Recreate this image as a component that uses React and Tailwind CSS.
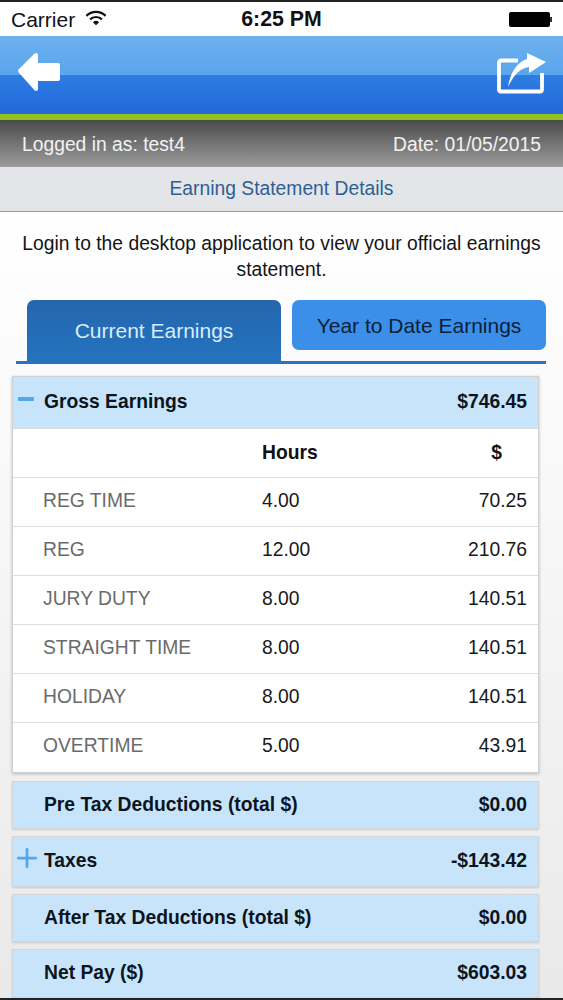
import { Plus } from 'lucide-react'

const rows = [
  { name: 'REG TIME', hours: '4.00', amount: '70.25' },
  { name: 'REG', hours: '12.00', amount: '210.76' },
  { name: 'JURY DUTY', hours: '8.00', amount: '140.51' },
  { name: 'STRAIGHT TIME', hours: '8.00', amount: '140.51' },
  { name: 'HOLIDAY', hours: '8.00', amount: '140.51' },
  { name: 'OVERTIME', hours: '5.00', amount: '43.91' },
]

function SummaryRow({ label, amount, icon, className }) {
  return (
    <div className={`ml-3 mr-6 flex items-center justify-between border border-[#d2d6da] bg-[#c8e4fb] pl-[31px] pr-[11px] text-[19.3px] font-bold text-[#0c1420] shadow-[0_1px_2px_rgba(0,0,0,0.15)] ${className}`}>
      <div className="relative">
        {icon}
        {label}
      </div>
      <div>{amount}</div>
    </div>
  )
}

function StatusBar() {
  return (
    <div className="flex h-9 items-center justify-between border-t-2 border-t-[#222] bg-white px-[11px] pt-[1px] text-[#111]">
      <div className="flex w-[150px] items-center gap-[10px] text-[21px]">
        Carrier
        <svg width="22" height="16" viewBox="0 0 24 17" fill="none" stroke="#111" strokeWidth="2.4" className="mb-[4px]">
          <path d="M1.5 6.2a15 15 0 0 1 21 0" />
          <path d="M5.5 10a9.5 9.5 0 0 1 13 0" />
          <path d="M12 16.5 8.6 13a5 5 0 0 1 6.8 0z" fill="#111" stroke="none" />
        </svg>
      </div>
      <div className="text-[21.3px] font-bold">6:25 PM</div>
      <div className="flex w-[150px] items-center justify-end">
        <div className="h-[15px] w-[41px] rounded-[2px] bg-black" />
        <div className="h-[5px] w-[2px] bg-[#333]" />
      </div>
    </div>
  )
}

function Header() {
  return (
    <div className="flex h-[78px] items-start justify-between bg-[linear-gradient(#6cb0ee_0%,#5ba5ec_50%,#2f7de3_50%,#2068d9_100%)] px-[17px] pt-[15px]">
      <svg width="44" height="42" viewBox="0 0 44 42" fill="#fff" stroke="#fff" strokeLinejoin="round" strokeWidth="4">
        <path d="M3 20 19 4v10h22v14H19v10z" />
      </svg>
      <svg width="50" height="46" viewBox="0 0 50 46" fill="none">
        <path d="M22 9.5H5a2 2 0 0 0-2 2v27a2 2 0 0 0 2 2h39a2 2 0 0 0 2-2V22" stroke="#fff" strokeWidth="3.8" />
        <path d="M12 36C14 22 21 11 31 8V2l19 9-17 11v-6C24 17 17 25 12 36z" fill="#fff" />
      </svg>
    </div>
  )
}

export default function App() {
  return (
    <div className="h-[1000px] w-[563px] overflow-hidden border-b-2 border-b-[#222] bg-[linear-gradient(#ffffff_20%,#f8f8f8_50%,#e9e9e9_100%)] font-['Liberation_Sans',Arial,sans-serif]">
      <StatusBar />
      <Header />
      <div className="h-[6px] bg-[#8fc31a]" />
      <div className="flex h-[47px] items-center justify-between bg-[linear-gradient(#4b4b4b,#9c9c9c)] px-[22px] pt-[4px] text-[19.3px] text-[#f2f2f2]">
        <div>Logged in as: test4</div>
        <div>Date: 01/05/2015</div>
      </div>
      <div className="flex h-[45px] items-center justify-center border-b border-b-[#999] bg-[#e3e5e8] pt-[1px] text-[19.3px] text-[#2e5f94]">
        Earning Statement Details
      </div>

      <p className="px-5 pt-[19px] text-center text-[19.3px] leading-[26px] text-[#151515]">
        Login to the desktop application to view your official earnings statement.
      </p>

      <div className="ml-4 mr-[17px] mt-[17px] flex h-[64px] items-start gap-[11px] border-b-[3px] border-b-[#2a72bd] pl-[11px]">
        <div className="flex h-[61px] w-[254px] items-center justify-center rounded-t-[7px] bg-[linear-gradient(#2566ad,#2473bf)] pt-[1px] text-[21px] text-[#d9ecfb]">
          Current Earnings
        </div>
        <div className="flex h-[50px] w-[254px] items-center justify-center rounded-[7px] bg-[#3b8fe8] pt-[2px] text-[21px] text-[#0b1f3a]">
          Year to Date Earnings
        </div>
      </div>

      <div className="ml-3 mr-6 mt-3 border border-[#cfd2d5] bg-white shadow-[0_1px_3px_rgba(0,0,0,0.25)]">
        <div className="flex h-[52px] items-center justify-between border-b border-b-[#d8dde2] bg-[#c8e4fb] pl-[31px] pr-[11px] text-[19.3px] font-bold text-[#0c1420]">
          <div className="relative">
            <div className="absolute left-[-26px] top-[9px] h-[4px] w-[16px] rounded-[1px] bg-[#55a7ea]" />
            Gross Earnings
          </div>
          <div>$746.45</div>
        </div>
        <div className="grid h-[49px] grid-cols-[218px_1fr_auto] items-center border-b border-b-[#dedede] pl-[31px] pr-9 text-[19.3px] font-bold text-[#111]">
          <div />
          <div>Hours</div>
          <div>$</div>
        </div>
        {rows.map((row, i) => (
          <div
            key={row.name}
            className={`grid h-[49px] grid-cols-[218px_1fr_auto] items-center pb-[2px] pl-[30px] pr-[11px] text-[19.3px] ${i < rows.length - 1 ? 'border-b border-b-[#dedede]' : ''}`}
          >
            <div className="text-[#6b6b6b]">{row.name}</div>
            <div className="pl-px text-[#1a1a1a]">{row.hours}</div>
            <div className="text-[#1a1a1a]">{row.amount}</div>
          </div>
        ))}
      </div>

      <SummaryRow className="mt-2 h-[48px]" label="Pre Tax Deductions (total $)" amount="$0.00" />
      <SummaryRow
        className="mt-[7px] h-[51px]"
        label="Taxes"
        amount="-$143.42"
        icon={<Plus size={30} strokeWidth={2.2} className="absolute left-[-32px] top-[-4px] text-[#55a7ea]" />}
      />
      <SummaryRow className="mt-[7px] h-[48px]" label="After Tax Deductions (total $)" amount="$0.00" />
      <SummaryRow className="mt-[7px] h-[49px]" label="Net Pay ($)" amount="$603.03" />
    </div>
  )
}
